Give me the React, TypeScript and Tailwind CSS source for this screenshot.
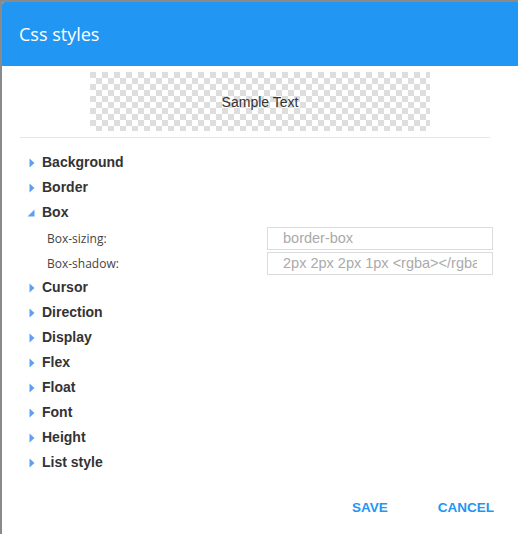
import React from "react";

const sans = { fontFamily: '"Liberation Sans", Arial, sans-serif' };

function Right() {
  return (
    <svg width="6" height="10" viewBox="0 0 6 10" className="block">
      <path d="M0.5 0.5 L5.5 5 L0.5 9.5 Z" fill="#5c9ff3" />
    </svg>
  );
}
function Down() {
  return (
    <svg width="8" height="8" viewBox="0 0 8 8" className="block">
      <path d="M7.5 0.5 L7.5 7.5 L0.5 7.5 Z" fill="#5c9ff3" />
    </svg>
  );
}

function Row({ label, open }: { label: string; open?: boolean }) {
  return (
    <div className="flex h-[25px] items-center">
      <div className="flex w-[22px] justify-end pr-[7px]">{open ? <Down /> : <Right />}</div>
      <span className="text-[14px] font-bold text-[#333]" style={sans}>
        {label}
      </span>
    </div>
  );
}

function Sub({ label, value }: { label: string; value: string }) {
  return (
    <div className="flex h-[25px] items-center">
      <span
        className="w-[247px] pl-[27px] text-[12px] text-[#444]"
        style={{ fontFamily: '"Open Sans", sans-serif' }}
      >
        {label}
      </span>
      <div className="flex h-[23px] w-[226px] items-center border border-[#dcdcdc] px-[15px]">
        <div
          className="overflow-hidden whitespace-nowrap text-[14.5px] text-[#aaa]"
          style={sans}
        >
          {value}
        </div>
      </div>
    </div>
  );
}

export default function App() {
  const before = ["Background", "Border"];
  const after = ["Cursor", "Direction", "Display", "Flex", "Float", "Font", "Height", "List style"];
  return (
    <div className="h-[534px] w-[518px] overflow-hidden bg-[#8a8a8a] pl-[2px] pt-[2px]">
      <div className="flex h-[532px] w-[516px] flex-col rounded-tl-[3px] bg-white">
        <div className="flex h-[64px] items-center rounded-tl-[3px] bg-[#2196f3] pl-[17px]">
          <span className="text-[18px] text-white" style={{ fontFamily: '"Open Sans", sans-serif' }}>
            Css styles
          </span>
        </div>
        <div className="flex justify-center pt-[6px]">
          <div
            className="flex h-[59px] w-[340px] items-center justify-center bg-[conic-gradient(white_25%,#dedede_0_50%,white_0_75%,#dedede_0)] bg-[length:12px_12px] pt-[1px] text-[14px] text-[#333]"
            style={sans}
          >
            Sample Text
          </div>
        </div>
        <div className="ml-[18px] mt-[6px] h-[1px] w-[470px] bg-[#e6e6e6]" />
        <div className="flex flex-col pl-[18px] pt-[12px]">
          {before.map((l) => (
            <Row key={l} label={l} />
          ))}
          <Row label="Box" open />
          <div className="-mb-[1px] mt-[1px] flex flex-col">
            <Sub label="Box-sizing:" value="border-box" />
            <Sub label="Box-shadow:" value="2px 2px 2px 1px <rgba></rgba>" />
          </div>
          {after.map((l) => (
            <Row key={l} label={l} />
          ))}
        </div>
        <div className="mt-auto flex h-[56px] items-center justify-end gap-[50px] pr-[24px] pt-[4px]">
          <span className="text-[13.5px] font-bold text-[#2196f3]" style={sans}>
            SAVE
          </span>
          <span className="text-[13.5px] font-bold text-[#2196f3]" style={sans}>
            CANCEL
          </span>
        </div>
      </div>
    </div>
  );
}
